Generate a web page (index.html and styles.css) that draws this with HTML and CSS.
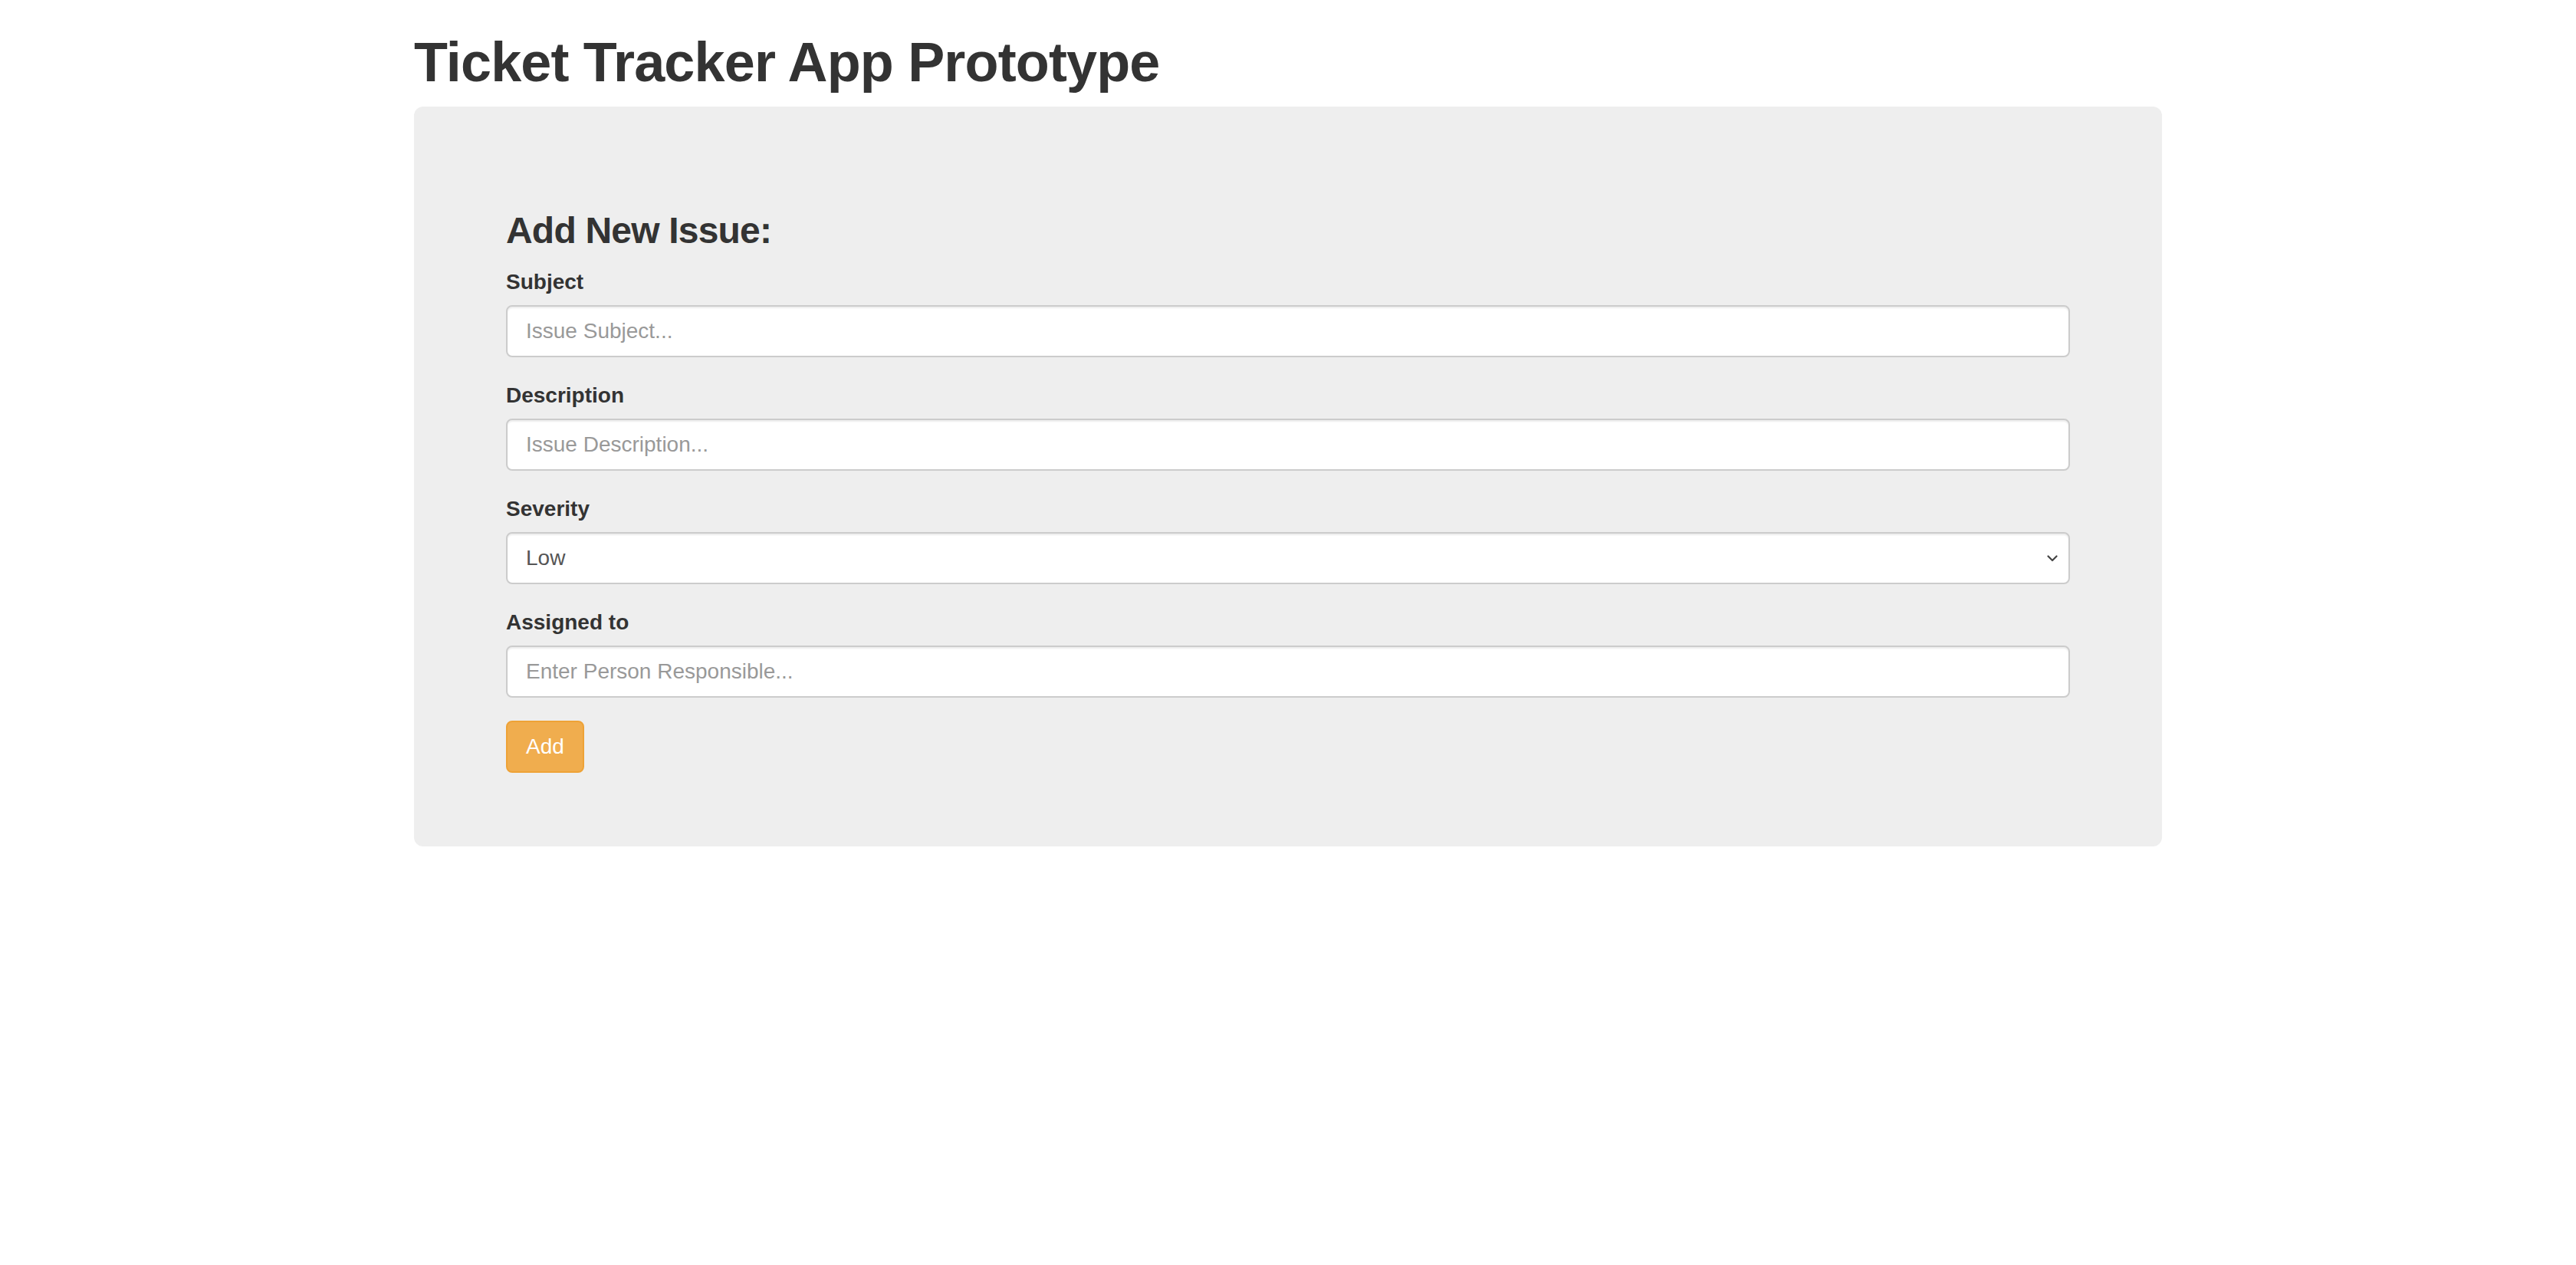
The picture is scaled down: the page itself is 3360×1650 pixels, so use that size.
FILE: index.html
```html
<!DOCTYPE html>
<html lang="en">
<head>
<meta charset="utf-8">
<title>Ticket Tracker App Prototype</title>
<link rel="stylesheet" href="styles.css">
</head>
<body>
<div class="container">
  <h1 class="page-title">Ticket Tracker App Prototype</h1>
  <div class="jumbotron">
    <h3 class="section-title">Add New Issue:</h3>
    <form class="issue-form">
      <div class="form-group">
        <label class="form-label" for="subject">Subject</label>
        <input class="form-control" id="subject" type="text" placeholder="Issue Subject...">
      </div>
      <div class="form-group">
        <label class="form-label" for="description">Description</label>
        <input class="form-control" id="description" type="text" placeholder="Issue Description...">
      </div>
      <div class="form-group">
        <label class="form-label" for="severity">Severity</label>
        <div class="select-wrap">
          <select class="form-control select-control" id="severity">
            <option>Low</option>
            <option>Medium</option>
            <option>High</option>
          </select>
          <svg class="select-chevron" width="14" height="9" viewBox="0 0 14 9" aria-hidden="true">
            <path d="M1.5 1.5 L7 7 L12.5 1.5" fill="none" stroke="#444444" stroke-width="2.2" stroke-linecap="round" stroke-linejoin="round"/>
          </svg>
        </div>
      </div>
      <div class="form-group">
        <label class="form-label" for="assigned">Assigned to</label>
        <input class="form-control" id="assigned" type="text" placeholder="Enter Person Responsible...">
      </div>
      <button type="button" class="btn btn-warning">Add</button>
    </form>
  </div>
</div>
</body>
</html>
```

FILE: styles.css
```css
* {
  box-sizing: border-box;
}

html, body {
  margin: 0;
  padding: 0;
  background: #ffffff;
}

body {
  font-family: "Liberation Sans", Arial, Helvetica, sans-serif;
  font-size: 28px;
  line-height: 1.42857143;
  color: #333333;
}

.container {
  width: 2340px;
  margin: 0 auto;
  padding: 0 30px;
}

.page-title {
  margin: 42px 0 18px;
  font-size: 72px;
  font-weight: 700;
  line-height: 1.1;
  letter-spacing: -0.85px;
  color: #333333;
}

.jumbotron {
  background: #eeeeee;
  border-radius: 12px;
  padding: 96px 120px;
  margin-bottom: 60px;
}

.section-title {
  margin: 40px 0 20px;
  font-size: 48px;
  font-weight: 700;
  line-height: 1.1;
  letter-spacing: -0.8px;
  color: #333333;
}

.form-group {
  margin-bottom: 30px;
}

.form-label {
  display: inline-block;
  margin-bottom: 10px;
  font-weight: 700;
  line-height: 40px;
}

.form-control {
  display: block;
  width: 100%;
  height: 68px;
  padding: 12px 24px;
  font-family: inherit;
  font-size: 28px;
  line-height: 1.42857143;
  color: #555555;
  background: #ffffff;
  border: 2px solid #cccccc;
  border-radius: 8px;
  box-shadow: inset 0 2px 2px rgba(0, 0, 0, 0.075);
  outline: none;
}

.form-control::placeholder {
  color: #999999;
  opacity: 1;
}

.select-wrap {
  position: relative;
}

.select-control {
  -webkit-appearance: none;
  appearance: none;
  padding-right: 56px;
}

.select-chevron {
  position: absolute;
  right: 16px;
  top: 30px;
  pointer-events: none;
}

.btn {
  display: inline-block;
  padding: 12px 24px;
  font-family: inherit;
  font-size: 28px;
  line-height: 1.42857143;
  border-radius: 8px;
  cursor: pointer;
}

.btn-warning {
  color: #ffffff;
  background: #f0ad4e;
  border: 2px solid #eea236;
}
```
